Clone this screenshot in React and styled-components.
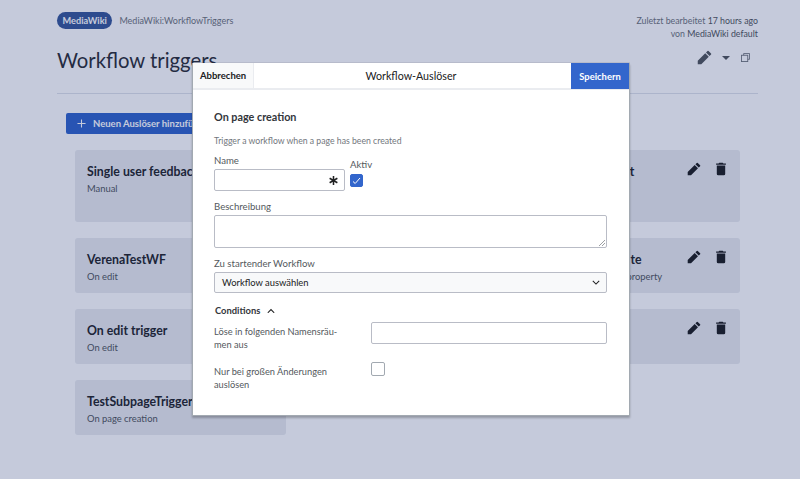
import React from "react";
import styled, { createGlobalStyle } from "styled-components";

const Global = createGlobalStyle`
html, body {
    margin: 0;
    padding: 0;
    background: #fff;
    font-family: Lato, "Liberation Sans", sans-serif;
    color: #202122;
}
* { box-sizing: border-box; }
`
const Page = styled.div`
position: relative;
width: 800px;
height: 479px;
overflow: hidden;
padding: 12px 42px 0 57px;
`
const TopRow = styled.div`
display: flex;
justify-content: space-between;
align-items: flex-start;
height: 42px;
`
const Crumbs = styled.div`
display: flex;
align-items: center;
gap: 7px;
font-size: 9px;
color: #72777d;
`
const Pill = styled.span`
background: #3a5a9b;
color: #fff;
font-weight: 700;
font-size: 9.2px;
height: 17px;
line-height: 17px;
padding: 0 5.5px;
border-radius: 9px;
`
const LastEdit = styled.div`
text-align: right;
font-size: 8.8px;
line-height: 13px;
margin-top: 2px;
color: #72777d;
b { font-weight: 400; color: #54595d; }
`
const TitleRow = styled.div`
display: flex;
justify-content: space-between;
align-items: flex-start;
height: 40px;
border-bottom: 1px solid #dfe3eb;
`
const Title = styled.h1`
margin: -9px 0 0;
font-size: 20.3px;
line-height: 30px;
font-weight: 400;
color: #2e3138;
`
const PageTools = styled.div`
display: flex;
align-items: center;
margin-top: -4px;
margin-right: 8px;
color: #54595d;
svg { display: block; }
`
const Caret = styled.span`
width: 0;
height: 0;
margin: 0 11px 0 10px;
border-left: 4px solid transparent;
border-right: 4px solid transparent;
border-top: 4px solid #54595d;
`
const AddButton = styled.button`
display: flex;
align-items: center;
gap: 7px;
margin: 19px 0 0 9px;
width: 170px;
height: 21px;
padding: 0 0 0 11px;
border: 0;
border-radius: 2px;
background: #36c;
color: #fff;
font: 700 9.5px Lato, sans-serif;
white-space: nowrap;
overflow: hidden;
svg { flex: none; }
`
const Cards = styled.div`
display: grid;
grid-template-columns: repeat(3, 211px);
grid-template-rows: 72px 55px 55px 55px;
gap: 16px 16px;
margin: 16px 0 0 18px;
`
const Card = styled.div`
position: relative;
padding: 13px 12px;
background: #eaecf0;
border-radius: 3px;
`
const CardName = styled.div`
font-size: 12.3px;
line-height: 18px;
font-weight: 700;
color: #26282c;
white-space: nowrap;
`
const CardKind = styled.div`
font-size: 9.4px;
line-height: 15px;
color: #54595d;
white-space: nowrap;
`
const CardActions = styled.div`
position: absolute;
top: 12px;
right: 12px;
display: flex;
gap: 13px;
color: #202122;
svg { display: block; }
`
const Overlay = styled.div`
position: absolute;
inset: 0;
background: rgba(4, 26, 100, 0.23);
`
const Dialog = styled.div`
position: absolute;
left: 192px;
top: 63px;
width: 438px;
height: 353px;
background: #fff;
border: 1px solid #a2a9b1;
border-width: 0 1px 1px 1px;
box-shadow: 0 2px 2px rgba(0, 0, 0, 0.25), 0 -1px 0 rgba(0, 0, 0, 0.07);
`
const DialogHead = styled.div`
display: flex;
align-items: stretch;
height: 27px;
border-bottom: 2px solid #eaecf0;
`
const Cancel = styled.div`
display: flex;
align-items: center;
padding: 0 7px;
width: 61px;
background: #f8f9fa;
border-right: 1px solid #eaecf0;
font-size: 9.5px;
font-weight: 700;
color: #202122;
`
const DialogTitle = styled.div`
flex: 1;
display: flex;
align-items: center;
justify-content: center;
padding-right: 3px;
font-size: 10.7px;
color: #202122;
`
const Save = styled.div`
display: flex;
align-items: center;
justify-content: center;
width: 58px;
margin-bottom: -1px;
background: #36c;
color: #fff;
font-size: 9.4px;
font-weight: 700;
`
const DialogBody = styled.div`
padding: 19px 22px 0 21px;
`
const Heading = styled.div`
font-size: 10.8px;
line-height: 15px;
font-weight: 700;
color: #33363b;
`
const Hint = styled.div`
margin-top: 10px;
font-size: 8.7px;
line-height: 13px;
color: #72777d;
`
const Label = styled.div`
padding-top: 1px;
font-size: 9.6px;
line-height: 13px;
color: #54595d;
`
const NameRow = styled.div`
display: flex;
gap: 5px;
margin-top: 6px;
`
const Field = styled.div`
display: flex;
flex-direction: column;
gap: 2px;
margin-top: ${p => p.$top || 0}px;
`
const TextInput = styled.div`
position: relative;
width: ${p => p.$width || "100%"};
height: ${p => p.$height || 22}px;
background: #fff;
border: 1px solid #b9bcc6;
border-radius: 2px;
flex: none;
`
const Required = styled.svg`
position: absolute;
right: 6px;
top: 6px;
`
const Grip = styled.svg`
position: absolute;
right: 1px;
bottom: 1px;
`
const ActiveField = styled.div`
display: flex;
flex-direction: column;
gap: 3px;
padding-top: 4px;
`
const CheckBox = styled.span`
display: flex;
align-items: center;
justify-content: center;
width: ${p => p.$size || 13}px;
height: ${p => p.$size || 13}px;
border-radius: 2px;
border: 1px solid ${p => (p.$on ? "#36c" : "#a2a9b1")};
background: ${p => (p.$on ? "#36c" : "#fff")};
flex: none;
`
const Select = styled.div`
display: flex;
align-items: center;
justify-content: space-between;
height: 21px;
padding: 0 6px 0 7px;
background: #f8f9fa;
border: 1px solid #b9bcc6;
border-radius: 2px;
font-size: 9.4px;
color: #202122;
`
const ConditionsToggle = styled.div`
display: flex;
align-items: center;
gap: 7px;
margin-top: 11px;
padding-left: 1px;
font-size: 9.4px;
line-height: 13px;
font-weight: 700;
color: #33363b;
`
const ConditionRow = styled.div`
display: grid;
grid-template-columns: 157px 1fr;
margin-top: ${p => p.$top}px;
`
const ConditionLabel = styled.div`
font-size: 9.25px;
line-height: 13.3px;
padding-top: 3px;
color: #54595d;
`

const Edit = ({ size = 14 }) => (
    <svg width={size} height={size} viewBox="0 0 20 20" fill="currentColor">
        <path d="M16.77 8l1.94-2a1 1 0 0 0 0-1.41l-3.3-3.3a1 1 0 0 0-1.41 0L12 3.23zM1 14.25V19h4.75l9.96-9.96-4.75-4.75z" />
    </svg>
)
const Trash = () => (
    <svg width="14" height="14" viewBox="0 0 20 20" fill="currentColor">
        <path d="M17 2h-3.5l-1-1h-5l-1 1H3v2h14zM4 17a2 2 0 0 0 2 2h8a2 2 0 0 0 2-2V5H4z" />
    </svg>
)
const Copy = () => (
    <svg width="9" height="9" viewBox="0 0 10 10" fill="none" stroke="#72777d" strokeWidth="1">
        <path d="M3 2.5V.5h6.5V7H7.5" />
        <rect x=".5" y="2.5" width="7" height="7" />
    </svg>
)
const Plus = () => (
    <svg width="9" height="9" viewBox="0 0 10 10" fill="none" stroke="#fff" strokeWidth="1.2">
        <path d="M5 .5v9M.5 5h9" />
    </svg>
)
const Chevron = ({ up, width = 8 }) => (
    <svg width={width} height={width * 0.7} viewBox="0 0 10 7" fill="none" stroke="#202122" strokeWidth="1.3">
        <path d={up ? "M1 6l4-4 4 4" : "M1 1l4 4 4-4"} />
    </svg>
)

const triggers = [
    { name: "Single user feedback", kind: "Manual" },
    { name: "Reminder", kind: "On edit" },
    { name: "Feedback on test", kind: "On edit" },
    { name: "VerenaTestWF", kind: "On edit" },
    { name: "Review", kind: "On edit" },
    { name: "On set property te", kind: "On value changes of property" },
    { name: "On edit trigger", kind: "On edit" },
    { name: "Review 2", kind: "On edit" },
    { name: "Test", kind: "Manual" },
    { name: "TestSubpageTrigger", kind: "On page creation" },
]

export default function App() {
    return (
        <Page>
            <Global />
            <TopRow>
                <Crumbs>
                    <Pill>MediaWiki</Pill>
                    <span>MediaWiki:WorkflowTriggers</span>
                </Crumbs>
                <LastEdit>
                    Zuletzt bearbeitet <b>17 hours ago</b>
                    <br />
                    von <b>MediaWiki default</b>
                </LastEdit>
            </TopRow>
            <TitleRow>
                <Title>Workflow triggers</Title>
                <PageTools>
                    <Edit size={15} />
                    <Caret />
                    <Copy />
                </PageTools>
            </TitleRow>
            <AddButton>
                <Plus />
                Neuen Auslöser hinzufügen
            </AddButton>
            <Cards>
                {triggers.map(t => (
                    <Card key={t.name}>
                        <CardName>{t.name}</CardName>
                        <CardKind>{t.kind}</CardKind>
                        <CardActions>
                            <Edit />
                            <Trash />
                        </CardActions>
                    </Card>
                ))}
            </Cards>
            <Overlay />
            <Dialog>
                <DialogHead>
                    <Cancel>Abbrechen</Cancel>
                    <DialogTitle>Workflow-Auslöser</DialogTitle>
                    <Save>Speichern</Save>
                </DialogHead>
                <DialogBody>
                    <Heading>On page creation</Heading>
                    <Hint>Trigger a workflow when a page has been created</Hint>
                    <NameRow>
                        <Field>
                            <Label>Name</Label>
                            <TextInput $width="131px">
                                <Required width="9" height="9" viewBox="0 0 10 10" stroke="#202122" strokeWidth="1.7">
                                    <path d="M5 0v10M.7 2.5l8.6 5M.7 7.5l8.6-5" />
                                </Required>
                            </TextInput>
                        </Field>
                        <ActiveField>
                            <Label>Aktiv</Label>
                            <CheckBox $on>
                                <svg width="9" height="8" viewBox="0 0 9 8" fill="none" stroke="#fff" strokeWidth="1">
                                    <path d="M1 4.5l2.2 2L8 1" />
                                </svg>
                            </CheckBox>
                        </ActiveField>
                    </NameRow>
                    <Field $top={8}>
                        <Label>Beschreibung</Label>
                        <TextInput $height={33}>
                            <Grip width="6" height="6" viewBox="0 0 6 6" stroke="#72777d" strokeWidth=".7">
                                <path d="M0 6l6-6M3 6l3-3" />
                            </Grip>
                        </TextInput>
                    </Field>
                    <Field $top={8}>
                        <Label>Zu startender Workflow</Label>
                        <Select>
                            Workflow auswählen
                            <Chevron />
                        </Select>
                    </Field>
                    <ConditionsToggle>
                        Conditions
                        <Chevron up width={8} />
                    </ConditionsToggle>
                    <ConditionRow $top={5}>
                        <ConditionLabel>
                            Löse in folgenden Namensräu-
                            <br />
                            men aus
                        </ConditionLabel>
                        <TextInput />
                    </ConditionRow>
                    <ConditionRow $top={10}>
                        <ConditionLabel>
                            Nur bei großen Änderungen
                            <br />
                            auslösen
                        </ConditionLabel>
                        <CheckBox $size={14} />
                    </ConditionRow>
                </DialogBody>
            </Dialog>
        </Page>
    );
}
